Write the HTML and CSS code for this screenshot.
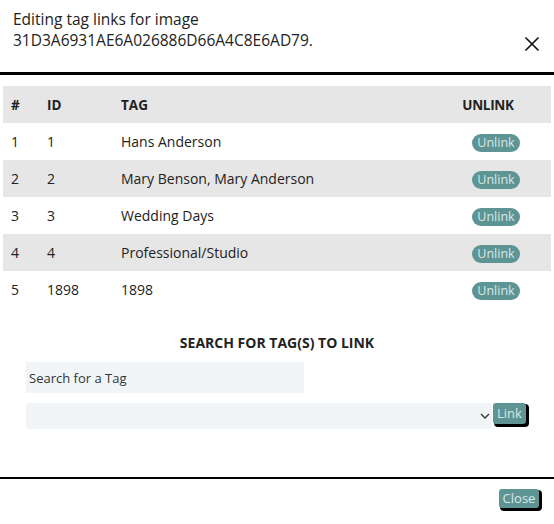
FILE: index.html
```html
<!DOCTYPE html>
<html>
<head>
	<meta charset="UTF-8" />
	<title>Edit tag links</title>
	<link rel="stylesheet" href="styles.css">
</head>
<body>
    <div class="modal">
        <div class="modal_head">
            <div class="modal_title">Editing tag links for image<br>31D3A6931AE6A026886D66A4C8E6AD79.</div>
            <svg class="modal_close" width="16" height="16" viewBox="0 0 16 16">
                <path d="M1.5 1.5 L14.5 14.5 M14.5 1.5 L1.5 14.5" stroke="#111" stroke-width="1.6" fill="none" />
            </svg>
        </div>

        <div class="modal_body">
            <table class="tag_table">
                <thead>
                    <tr>
                        <th>#</th>
                        <th class="col_id">ID</th>
                        <th class="col_tag">TAG</th>
                        <th class="col_unlink">UNLINK</th>
                    </tr>
                </thead>
                <tbody>
                    <tr><td>1</td><td>1</td><td>Hans Anderson</td><td class="col_unlink"><button class="btn_unlink">Unlink</button></td></tr>
                    <tr><td>2</td><td>2</td><td>Mary Benson, Mary Anderson</td><td class="col_unlink"><button class="btn_unlink">Unlink</button></td></tr>
                    <tr><td>3</td><td>3</td><td>Wedding Days</td><td class="col_unlink"><button class="btn_unlink">Unlink</button></td></tr>
                    <tr><td>4</td><td>4</td><td>Professional/Studio</td><td class="col_unlink"><button class="btn_unlink">Unlink</button></td></tr>
                    <tr><td>5</td><td>1898</td><td>1898</td><td class="col_unlink"><button class="btn_unlink">Unlink</button></td></tr>
                </tbody>
            </table>

            <div class="search_head">SEARCH FOR TAG(S) TO LINK</div>
            <div class="search_box">
                <input type="text" class="search_input" placeholder="Search for a Tag" />
                <div class="link_row">
                    <div class="select_wrap">
                        <select class="tag_select"><option></option></select>
                        <svg class="select_arrow" width="10" height="6" viewBox="0 0 10 6">
                            <path d="M1 1 L5 5 L9 1" stroke="#333" stroke-width="1.3" fill="none" />
                        </svg>
                    </div>
                    <button class="btn_dark">Link</button>
                </div>
            </div>
        </div>

        <div class="modal_foot">
            <button class="btn_dark btn_close">Close</button>
        </div>
    </div>
</body>
</html>
```

FILE: styles.css
```css
body{
    margin: 0;
    font-family: "Open Sans", "Noto Sans", sans-serif;
    color: #222;
    background: #fff;
}

.modal{
    width: 554px;
    height: 524px;
    display: flex;
    flex-direction: column;
}

.modal_head{
    display: flex;
    align-items: center;
    justify-content: space-between;
    padding: 9px 14px 0 13px;
    height: 63px;
    border-bottom: 3px solid #000;
    box-sizing: content-box;
}

.modal_title{
    font-size: 15.5px;
    line-height: 21px;
    align-self: flex-start;
}

.modal_close{
    margin-top: 6px;
}

.modal_body{
    flex: 1;
    padding: 11px 3px 0;
}

.tag_table{
    width: 100%;
    border-collapse: collapse;
    font-size: 14px;
}

.tag_table th{
    text-align: left;
    font-weight: bold;
    height: 37px;
    background: #e6e6e6;
    font-size: 13.5px;
}

.tag_table td{
    height: 37px;
}

.tag_table tbody tr:nth-child(even) td{
    background: #e6e6e6;
}

.tag_table th,
.tag_table td{
    padding: 0;
}

.tag_table th:first-child,
.tag_table td:first-child{
    padding-left: 8px;
    width: 36px;
}

.col_id{
    width: 74px;
}

.tag_table .col_unlink{
    text-align: center;
    width: 90px;
    padding-right: 18px;
    letter-spacing: -0.3px;
}

.btn_unlink{
    font-family: inherit;
    font-size: 12.5px;
    color: #d8e8e8;
    background: #5e9494;
    border: 0;
    border-radius: 10px;
    padding: 0 5px;
    height: 18px;
    line-height: 18px;
    margin-left: 16px;
    letter-spacing: 0;
}

.search_head{
    text-align: center;
    font-weight: bold;
    font-size: 14px;
    margin-top: 25px;
}

.search_box{
    padding: 10px 0 0 23px;
}

.search_input{
    display: block;
    width: 278px;
    height: 31px;
    box-sizing: border-box;
    border: 0;
    background: #f1f5f8;
    font-family: inherit;
    font-size: 13px;
    padding: 0 3px;
    color: #222;
}

.search_input::placeholder{
    color: #333;
}

.link_row{
    display: flex;
    align-items: flex-start;
    margin-top: 10px;
}

.select_wrap{
    display: flex;
    align-items: center;
    width: 466px;
    height: 26px;
    border-radius: 3px;
    background: #f1f5f8;
}

.tag_select{
    flex: 1;
    height: 26px;
    border: 0;
    background: transparent;
    appearance: none;
    -webkit-appearance: none;
}

.select_arrow{
    margin-right: 2px;
}

.btn_dark{
    font-family: inherit;
    font-size: 13px;
    color: #d8e8e8;
    background: #5e9494;
    border: 0;
    border-radius: 3px;
    padding: 0 4px;
    height: 21px;
    line-height: 21px;
    box-shadow: 2px 2px 0 1px #000;
    margin-left: 1px;
}

.btn_close{
    width: 40px;
    height: 19px;
    line-height: 19px;
    padding: 0;
}

.modal_foot{
    border-top: 2px solid #000;
    height: 47px;
    box-sizing: border-box;
    display: flex;
    justify-content: flex-end;
    align-items: flex-start;
    padding: 10px 15px 0 0;
}
```
